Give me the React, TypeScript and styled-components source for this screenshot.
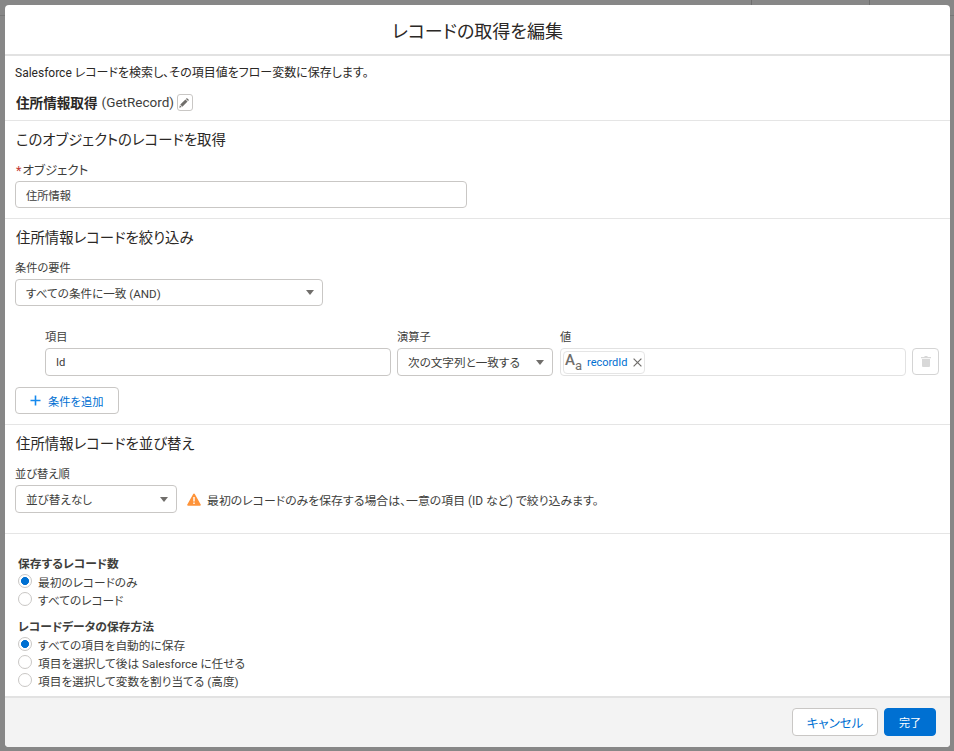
import styled, { createGlobalStyle } from "styled-components";

const GlobalStyle = createGlobalStyle`
	html, body {
		margin: 0;
		padding: 0;
	}
	body {
		font-family: Roboto, "Noto Sans CJK JP", sans-serif;
		font-feature-settings: "palt";
		color: #3e3e3c;
	}
`;

// dimmed flow builder behind the modal, only its grid lines show around the edges
const Backdrop = styled.div`
	width: 954px;
	height: 751px;
	box-sizing: border-box;
	padding: 5px 4px 4px 5px;
	overflow: hidden;
	background-color: #878787;
	background-image: linear-gradient(#6f6f6f, #6f6f6f), linear-gradient(#6f6f6f, #6f6f6f), linear-gradient(#777, #777);
	background-size: 1px 5px, 1px 5px, 100% 1px;
	background-position: 751px 0, 869px 0, 0 15px;
	background-repeat: no-repeat;
`;

const Modal = styled.div`
	height: 742px;
	display: flex;
	flex-direction: column;
	background: #fff;
	border-radius: 4px;
	overflow: hidden;
`;

const Header = styled.header`
	height: 49px;
	flex: none;
	display: flex;
	align-items: center;
	justify-content: center;
	border-bottom: 2px solid #e2e2e2;
	font-size: 18px;
	color: #2b2826;
`;

const Section = styled.section<{ $top: number; $bottom: number }>`
	flex: none;
	padding: ${(p) => p.$top}px 11px ${(p) => p.$bottom}px 10px;
	border-bottom: 1px solid #e5e5e5;
`;

const SaveSection = styled.section`
	flex: 1;
	padding: 22px 13px 0;
`;

const Description = styled.p`
	margin: 0;
	font-size: 12px;
	line-height: 16px;
	color: #2b2826;
`;

const NameRow = styled.div`
	display: flex;
	align-items: center;
	height: 18px;
	margin-top: 12px;
	margin-left: 1px;
	font-size: 13.6px;
	color: #2b2826;
`;

const ElementName = styled.strong`
	font-weight: 700;
	margin-right: 4px;
`;

const ApiName = styled.span`
	font-size: 13.5px;
	color: #3e3e3c;
`;

const EditButton = styled.button`
	width: 16px;
	height: 17px;
	margin-left: 3px;
	padding: 0;
	display: flex;
	align-items: center;
	justify-content: center;
	background: #fff;
	border: 1px solid #c9c7c5;
	border-radius: 3px;
`;

const SectionTitle = styled.h2`
	margin: 0;
	font-size: 14.4px;
	line-height: 20px;
	font-weight: 400;
	color: #2b2826;
	padding-left: 1px;
`;

const Label = styled.label<{ $top?: number; $bottom?: number; $size?: number }>`
	display: block;
	margin-top: ${(p) => p.$top ?? 0}px;
	margin-bottom: ${(p) => p.$bottom ?? 3}px;
	font-size: ${(p) => p.$size ?? 11.25}px;
	line-height: 14px;
	color: #3e3e3c;
`;

const Required = styled.abbr`
	color: #c23934;
	margin: 0 1px;
	text-decoration: none;
`;

const TextBox = styled.div<{ $width?: number; $height?: number }>`
	box-sizing: border-box;
	width: ${(p) => (p.$width ? `${p.$width}px` : "auto")};
	height: ${(p) => p.$height ?? 27}px;
	display: flex;
	align-items: center;
	padding: 0 10px;
	background: #fff;
	border: 1px solid #c9c7c5;
	border-radius: 4px;
	font-size: 11.25px;
	color: #3e3e3c;
`;

const SelectBox = styled(TextBox)`
	justify-content: space-between;
	padding-right: 8px;
	font-size: 11.6px;
`;

const Caret = styled.span`
	width: 0;
	height: 0;
	border-left: 4.5px solid transparent;
	border-right: 4.5px solid transparent;
	border-top: 5.5px solid #706e6b;
`;

const ConditionRow = styled.div`
	display: grid;
	grid-template-columns: 346px 156px 346px 28px;
	column-gap: 6px;
	align-items: end;
	margin: 25px 0 0 30px;
`;

const ValueColumn = styled.div`
	margin-left: 1px;
	width: 346px;
`;

const PillBox = styled.div`
	box-sizing: border-box;
	height: 28px;
	padding: 0 2px;
	display: flex;
	align-items: center;
	border: 1px solid #e2e2e2;
	border-radius: 4px;
`;

const Pill = styled.div`
	height: 23px;
	box-sizing: border-box;
	display: flex;
	align-items: center;
	padding: 0 2px 0 1px;
	border: 1px solid #e5e5e5;
	border-radius: 4px;
	font-size: 11px;
	color: #0070d2;
`;

const TypeIcon = styled.span`
	display: flex;
	align-items: baseline;
	width: 20px;
	margin-right: 2px;
	color: #706e6b;
	font-size: 15px;
	font-weight: 500;
	line-height: 14px;
	transform: translateY(-2px);
`;

const TypeIconSmall = styled.span`
	font-size: 13px;
	font-weight: 400;
	position: relative;
	top: 5px;
	margin-left: 0;
`;

const PillClose = styled.span`
	display: flex;
	margin-left: 5px;
`;

const TrashButton = styled.button`
	margin-left: 1px;
	height: 27px;
	align-self: start;
	grid-row: 1;
	grid-column: 4;
	margin-top: 17px;
	padding: 0;
	display: flex;
	align-items: center;
	justify-content: center;
	background: #fff;
	border: 1px solid #d4d4d4;
	border-radius: 4px;
`;

const AddButton = styled.button`
	box-sizing: border-box;
	width: 104px;
	height: 27px;
	margin-top: 11px;
	padding: 0 0 0 14px;
	display: flex;
	align-items: center;
	gap: 7px;
	background: #fff;
	border: 1px solid #c9c7c5;
	border-radius: 4px;
	font: inherit;
	font-size: 11.25px;
	color: #0070d2;
`;

const SortRow = styled.div`
	display: flex;
	align-items: center;
	gap: 10px;
`;

const Warning = styled.div`
	display: flex;
	align-items: center;
	gap: 6px;
	font-size: 11.9px;
	color: #3e3e3c;
`;

const GroupTitle = styled.div<{ $top?: number }>`
	margin-top: ${(p) => p.$top ?? 0}px;
	font-size: 11.75px;
	line-height: 16px;
	font-weight: 700;
	color: #3e3e3c;
`;

const RadioRow = styled.div`
	display: flex;
	align-items: center;
	gap: 6px;
	height: 18px;
	font-size: 11.7px;
	color: #3e3e3c;
`;

const RadioCircle = styled.span<{ $checked?: boolean }>`
	box-sizing: border-box;
	width: 14px;
	height: 14px;
	flex: none;
	border: 1px solid #c9c7c5;
	border-radius: 50%;
	background: ${(p) =>
		p.$checked ? "radial-gradient(circle, #0070d2 0 3.7px, #fff 4.3px)" : "#fff"};
`;

const Footer = styled.footer`
	height: 51px;
	flex: none;
	box-sizing: border-box;
	display: flex;
	align-items: flex-start;
	justify-content: flex-end;
	gap: 6px;
	padding: 10px 14px 0 0;
	background: #f3f3f3;
	border-top: 2px solid #e2e2e2;
`;

const FooterButton = styled.button<{ $primary?: boolean }>`
	box-sizing: border-box;
	width: ${(p) => (p.$primary ? 52 : 86)}px;
	height: 28px;
	padding: 0;
	background: ${(p) => (p.$primary ? "#0070d2" : "#fff")};
	border: 1px solid ${(p) => (p.$primary ? "#0070d2" : "#c9c7c5")};
	border-radius: 4px;
	font: inherit;
	font-size: ${(p) => (p.$primary ? 11 : 12.5)}px;
	color: ${(p) => (p.$primary ? "#fff" : "#0070d2")};
`;

const PencilIcon = () => (
	<svg width="11" height="11" viewBox="0 0 12 12">
		<path d="M8.6 1.1l2.3 2.3-1 1-2.3-2.3zM7 2.7L9.3 5l-5.6 5.6-2.3-2.3zM1 9l2 2-2.7.7z" fill="#706e6b" />
	</svg>
);

const PlusIcon = () => (
	<svg width="11" height="11" viewBox="0 0 11 11">
		<path d="M5.5 0.5v10M0.5 5.5h10" stroke="#1589ee" strokeWidth="1.6" />
	</svg>
);

const CloseIcon = () => (
	<svg width="9" height="9" viewBox="0 0 9 9">
		<path d="M.6.6l7.8 7.8M8.4.6L.6 8.4" stroke="#706e6b" strokeWidth="1.2" />
	</svg>
);

const TrashIcon = () => (
	<svg width="10" height="11" viewBox="0 0 10 11">
		<path d="M3.5 0h3v1H10v1.2H0V1h3.5zM1 3h8v7a1 1 0 0 1-1 1H2a1 1 0 0 1-1-1z" fill="#d8d8d8" />
	</svg>
);

const WarningIcon = () => (
	<svg width="14" height="13" viewBox="0 0 14 13">
		<path d="M7 0.5a.9.9 0 0 1 .8.5l5.9 10.4a.9.9 0 0 1-.8 1.4H1.1a.9.9 0 0 1-.8-1.4L6.2 1a.9.9 0 0 1 .8-.5z" fill="#fe9339" />
		<path d="M6.3 4h1.4v4.6H6.3zM6.3 9.6h1.4V11H6.3z" fill="#fff" />
	</svg>
);

export default function App() {
	return (
		<>
			<GlobalStyle />
			<Backdrop>
				<Modal>
					<Header>レコードの取得を編集</Header>

					<Section $top={9} $bottom={9}>
						<Description>Salesforce レコードを検索し、その項目値をフロー変数に保存します。</Description>
						<NameRow>
							<ElementName>住所情報取得</ElementName>
							<ApiName>(GetRecord)</ApiName>
							<EditButton>
								<PencilIcon />
							</EditButton>
						</NameRow>
					</Section>

					<Section $top={10} $bottom={10}>
						<SectionTitle>このオブジェクトのレコードを取得</SectionTitle>
						<Label $top={13} $size={12.5}>
							<Required>*</Required>オブジェクト
						</Label>
						<TextBox $width={452}>住所情報</TextBox>
					</Section>

					<Section $top={10} $bottom={10}>
						<SectionTitle>住所情報レコードを絞り込み</SectionTitle>
						<Label $top={13}>条件の要件</Label>
						<SelectBox $width={308}>
							すべての条件に一致 (AND)
							<Caret />
						</SelectBox>
						<ConditionRow>
							<div>
								<Label>項目</Label>
								<TextBox $height={28}>Id</TextBox>
							</div>
							<div>
								<Label>演算子</Label>
								<SelectBox $height={28}>
									次の文字列と一致する
									<Caret />
								</SelectBox>
							</div>
							<ValueColumn>
								<Label>値</Label>
								<PillBox>
									<Pill>
										<TypeIcon>
											A<TypeIconSmall>a</TypeIconSmall>
										</TypeIcon>
										recordId
										<PillClose>
											<CloseIcon />
										</PillClose>
									</Pill>
								</PillBox>
							</ValueColumn>
							<TrashButton>
								<TrashIcon />
							</TrashButton>
						</ConditionRow>
						<AddButton>
							<PlusIcon />
							条件を追加
						</AddButton>
					</Section>

					<Section $top={10} $bottom={20}>
						<SectionTitle>住所情報レコードを並び替え</SectionTitle>
						<Label $top={13} $bottom={3}>並び替え順</Label>
						<SortRow>
							<SelectBox $width={162} $height={28}>
								並び替えなし
								<Caret />
							</SelectBox>
							<Warning>
								<WarningIcon />
								最初のレコードのみを保存する場合は、一意の項目 (ID など) で絞り込みます。
							</Warning>
						</SortRow>
					</Section>

					<SaveSection>
						<GroupTitle>保存するレコード数</GroupTitle>
						<RadioRow>
							<RadioCircle $checked />
							最初のレコードのみ
						</RadioRow>
						<RadioRow>
							<RadioCircle />
							すべてのレコード
						</RadioRow>
						<GroupTitle $top={11}>レコードデータの保存方法</GroupTitle>
						<RadioRow>
							<RadioCircle $checked />
							すべての項目を自動的に保存
						</RadioRow>
						<RadioRow>
							<RadioCircle />
							項目を選択して後は Salesforce に任せる
						</RadioRow>
						<RadioRow>
							<RadioCircle />
							項目を選択して変数を割り当てる (高度)
						</RadioRow>
					</SaveSection>

					<Footer>
						<FooterButton>キャンセル</FooterButton>
						<FooterButton $primary>完了</FooterButton>
					</Footer>
				</Modal>
			</Backdrop>
		</>
	);
}
